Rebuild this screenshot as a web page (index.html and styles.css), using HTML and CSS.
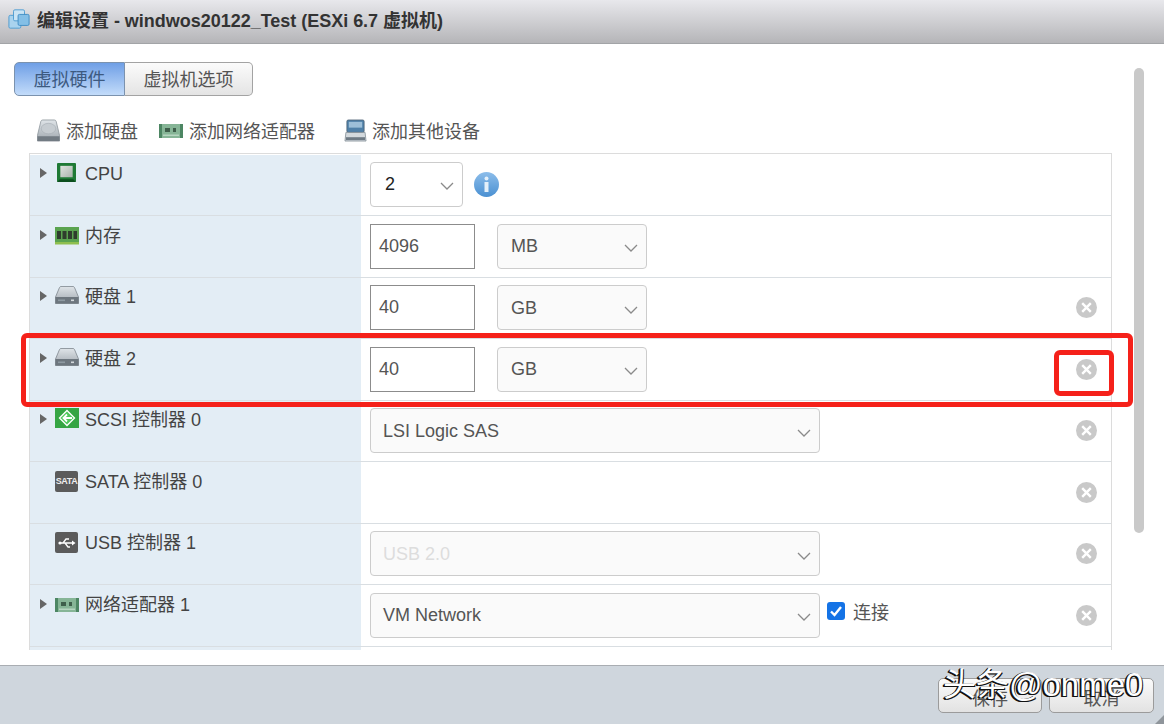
FILE: index.html
```html
<!DOCTYPE html>
<html lang="zh">
<head>
<meta charset="utf-8">
<title>编辑设置</title>
<link rel="stylesheet" href="styles.css">
</head>
<body>
<svg class="defs" width="0" height="0">
  <defs>
    <linearGradient id="disk" x1="0" y1="0" x2="0" y2="1"><stop offset="0" stop-color="#dfe4e8"/><stop offset="0.7" stop-color="#b3bac0"/><stop offset="1" stop-color="#9aa2a9"/></linearGradient>
    <linearGradient id="info" x1="0" y1="0" x2="0" y2="1"><stop offset="0" stop-color="#8cbdea"/><stop offset="1" stop-color="#4a90d2"/></linearGradient>
    <linearGradient id="cpu" x1="0" y1="0" x2="1" y2="1"><stop offset="0" stop-color="#dfe5df"/><stop offset="1" stop-color="#a9b3ab"/></linearGradient>
    <symbol id="i-disk" viewBox="0 0 24 18">
      <path d="M4.5 1.5Q5 .5 6 .5h12q1 0 1.500 1L23.500 11v6.500H.5V11z" fill="url(#disk)" stroke="#7f878e" stroke-width=".8"/>
      <rect x=".5" y="11" width="23" height="6.500" fill="#6d767e"/>
      <rect x="16" y="13.500" width="3" height="1.600" fill="#d3d8dc"/><rect x="3" y="13.500" width="7" height="1.600" fill="#8e99a1"/>
    </symbol>
    <symbol id="i-nic" viewBox="0 0 24 14">
      <rect x="0" y="0" width="24" height="14" fill="#86b596"/>
      <rect x="0" y="0" width="3" height="14" fill="#4d8663"/><rect x="21" y="0" width="3" height="14" fill="#4d8663"/>
      <rect x="6" y="4" width="5" height="4" fill="#3f5f4b"/><rect x="14" y="4" width="3" height="4" fill="#3f5f4b"/>
      <rect x="4" y="10.500" width="16" height="1.500" fill="#b6d6c0"/>
    </symbol>
  </defs>
</svg>
<div class="dialog">
  <header class="titlebar">
    <svg class="title-icon" viewBox="0 0 24 24"><rect x="1" y="8" width="13" height="14" rx="1.500" fill="#a9d3ee" stroke="#4b9ad0"/><rect x="6" y="2" width="12" height="12" rx="1.500" fill="#c9e4f5" stroke="#4b9ad0"/><rect x="11" y="7" width="12" height="12" rx="1.500" fill="#84bfe6" stroke="#3f8cc4"/></svg>
    <h1 class="title">编辑设置 - windwos20122_Test (ESXi 6.7 虚拟机)</h1>
  </header>
  <main class="body">
    <div class="content">
      <div class="tabs">
        <div class="tab tab-active">虚拟硬件</div>
        <div class="tab">虚拟机选项</div>
      </div>
      <div class="toolbar">
        <div class="tool tool-disk"><svg class="tool-icon" viewBox="0 0 24 24"><path d="M4 2.500Q4.500 1 6 1h12q1.500 0 2 1.500L23.500 17v6H.5v-6z" fill="url(#disk)" stroke="#8a9299" stroke-width=".8"/><ellipse cx="12" cy="10" rx="7.500" ry="5.500" fill="#c6ccd1" stroke="#a5acb2" stroke-width=".6"/><rect x=".5" y="18" width="23" height="5" fill="#727b83"/></svg>添加硬盘</div>
        <div class="tool tool-nic"><svg class="tool-icon-nic"><use href="#i-nic"/></svg>添加网络适配器</div>
        <div class="tool"><svg class="tool-icon" viewBox="0 0 24 24"><rect x="3" y="1" width="18" height="13" rx="1.500" fill="#4f80a8" stroke="#4a5f70" stroke-width=".8"/><rect x="5" y="3" width="14" height="6" fill="#9dbfd8"/><path d="M2 14h20l1 9H1z" fill="#d3d9dd" stroke="#7f8a93" stroke-width=".8"/><rect x="2" y="19" width="20" height="3" fill="#6e7a84"/></svg>添加其他设备</div>
      </div>
      <div class="table">
        <div class="row">
          <div class="label"><span class="arrow"></span><svg class="hw-icon hw-cpu" viewBox="0 0 20 20"><rect x="0" y="0" width="20" height="20" rx="1" fill="#1f7a35"/><rect x="3.500" y="3" width="13" height="12" fill="url(#cpu)"/><path d="M0 20l3-3h14l3 3z" fill="#0c4f1e"/></svg><span>CPU</span></div>
          <div class="cell">
            <div class="select select-cpu"><span class="value-dark">2</span><svg class="chev" viewBox="0 0 14 8"><path d="M1 1l6 6 6-6"/></svg></div>
            <svg class="info" viewBox="0 0 25 25"><circle cx="12.500" cy="12.500" r="12.500" fill="url(#info)"/><circle cx="12.500" cy="6.500" r="2" fill="#e4f0fa"/><rect x="10.500" y="10" width="4" height="10" fill="#e4f0fa"/></svg>
          </div>
        </div>
        <div class="row">
          <div class="label"><span class="arrow"></span><svg class="hw-icon hw-ram" viewBox="0 0 24 18"><rect x="0" y="0" width="24" height="15" fill="#5aa34f"/><rect x="0" y="15" width="24" height="2.500" fill="#8fbf4f"/><rect x="2" y="4" width="4" height="8" fill="#2f3d2d"/><rect x="7.500" y="4" width="4" height="8" fill="#2f3d2d"/><rect x="13" y="4" width="4" height="8" fill="#2f3d2d"/><rect x="18.500" y="4" width="3.500" height="8" fill="#2f3d2d"/></svg><span>内存</span></div>
          <div class="cell">
            <div class="input">4096</div>
            <div class="select select-unit"><span>MB</span><svg class="chev" viewBox="0 0 14 8"><path d="M1 1l6 6 6-6"/></svg></div>
          </div>
        </div>
        <div class="row">
          <div class="label"><span class="arrow"></span><svg class="hw-icon"><use href="#i-disk"/></svg><span>硬盘 1</span></div>
          <div class="cell">
            <div class="input">40</div>
            <div class="select select-unit"><span>GB</span><svg class="chev" viewBox="0 0 14 8"><path d="M1 1l6 6 6-6"/></svg></div>
            <svg class="close" viewBox="0 0 21 21"><circle cx="10.500" cy="10.500" r="10.500"/><path d="M6.200 6.200l8.600 8.600M14.800 6.200l-8.600 8.600"/></svg>
          </div>
        </div>
        <div class="row">
          <div class="label"><span class="arrow"></span><svg class="hw-icon"><use href="#i-disk"/></svg><span>硬盘 2</span></div>
          <div class="cell">
            <div class="input">40</div>
            <div class="select select-unit"><span>GB</span><svg class="chev" viewBox="0 0 14 8"><path d="M1 1l6 6 6-6"/></svg></div>
            <svg class="close" viewBox="0 0 21 21"><circle cx="10.500" cy="10.500" r="10.500"/><path d="M6.200 6.200l8.600 8.600M14.800 6.200l-8.600 8.600"/></svg>
          </div>
        </div>
        <div class="row">
          <div class="label"><span class="arrow"></span><svg class="hw-icon hw-scsi" viewBox="0 0 24 20"><rect x="0" y="0" width="24" height="20" fill="#35a544"/><path d="M12 2.500l7.500 7.500-7.500 7.500L4.500 10z" fill="#4ec85c" stroke="#fff" stroke-width="1.300"/><path d="M12 6.500L8.500 10l3.500 3.500M9 10h8" fill="none" stroke="#fff" stroke-width="1.800"/></svg><span>SCSI 控制器 0</span></div>
          <div class="cell">
            <div class="select select-wide"><span>LSI Logic SAS</span><svg class="chev" viewBox="0 0 14 8"><path d="M1 1l6 6 6-6"/></svg></div>
            <svg class="close" viewBox="0 0 21 21"><circle cx="10.500" cy="10.500" r="10.500"/><path d="M6.200 6.200l8.600 8.600M14.800 6.200l-8.600 8.600"/></svg>
          </div>
        </div>
        <div class="row">
          <div class="label label-noarrow"><span class="dev-badge"><span class="sata">SATA</span></span><span>SATA 控制器 0</span></div>
          <div class="cell">
            <svg class="close" viewBox="0 0 21 21"><circle cx="10.500" cy="10.500" r="10.500"/><path d="M6.200 6.200l8.600 8.600M14.800 6.200l-8.600 8.600"/></svg>
          </div>
        </div>
        <div class="row">
          <div class="label label-noarrow"><span class="dev-badge"><svg class="usb" viewBox="0 0 18 14"><path d="M1 7h15M5 7l3-4h3M7 7l3 4h2" fill="none" stroke="#fff" stroke-width="1.300"/><circle cx="2" cy="7" r="1.600" fill="#fff"/><path d="M14 4.500l3.500 2.500-3.500 2.500z" fill="#fff"/></svg></span><span>USB 控制器 1</span></div>
          <div class="cell">
            <div class="select select-wide select-disabled"><span>USB 2.0</span><svg class="chev" viewBox="0 0 14 8"><path d="M1 1l6 6 6-6"/></svg></div>
            <svg class="close" viewBox="0 0 21 21"><circle cx="10.500" cy="10.500" r="10.500"/><path d="M6.200 6.200l8.600 8.600M14.800 6.200l-8.600 8.600"/></svg>
          </div>
        </div>
        <div class="row">
          <div class="label"><span class="arrow"></span><svg class="hw-icon hw-nic"><use href="#i-nic"/></svg><span>网络适配器 1</span></div>
          <div class="cell">
            <div class="select select-wide"><span>VM Network</span><svg class="chev" viewBox="0 0 14 8"><path d="M1 1l6 6 6-6"/></svg></div>
            <label class="check"><svg class="check-box" viewBox="0 0 18 18"><rect width="18" height="18" rx="3" fill="#1473e6"/><path d="M4 9.500l3.500 3.500L14 5" fill="none" stroke="#fff" stroke-width="2.400"/></svg>连接</label>
            <svg class="close" viewBox="0 0 21 21"><circle cx="10.500" cy="10.500" r="10.500"/><path d="M6.200 6.200l8.600 8.600M14.800 6.200l-8.600 8.600"/></svg>
          </div>
        </div>
        <div class="row"><div class="label"></div><div class="cell"></div></div>
      </div>
    </div>
    <div class="scrollbar"><div class="thumb"></div></div>
  </main>
  <footer class="footer">
    <div class="btn btn-save">保存</div>
    <div class="btn">取消</div>
    <svg class="grip" viewBox="0 0 10 10"><path d="M10 0v10H0z" fill="#8f959b"/></svg>
  </footer>
</div>
<div class="mark mark-row"></div>
<div class="mark mark-close"></div>
<div class="watermark">头条@onme0</div>
</body>
</html>
```

FILE: styles.css
```css
* { box-sizing: border-box; }
html, body { margin: 0; height: 100%; }
body {
  position: relative;
  width: 1164px;
  height: 724px;
  overflow: hidden;
  background: #fff;
  font-family: "Liberation Sans", "Noto Sans CJK SC", sans-serif;
  font-size: 18px;
  color: #444;
}
.defs { position: absolute; }
.dialog { display: flex; flex-direction: column; height: 724px; }

.titlebar {
  flex: 0 0 44px;
  display: flex;
  align-items: center;
  padding: 0 0 5px 8px;
  gap: 7px;
  background: linear-gradient(#e8e8ec, #b5b5b8);
  border-bottom: 1px solid #a2a4a7;
}
.title-icon { width: 22px; height: 22px; }
.title { margin: 0; font-size: 18px; font-weight: 700; color: #333; white-space: nowrap; letter-spacing: -0.02px; }

.body { flex: 1; display: flex; min-height: 0; }
.content { width: 1134px; padding: 18px 0 0 14px; }

.tabs { display: flex; width: 239px; height: 34px; }
.tab {
  display: flex; align-items: center; justify-content: center;
  width: 128px; padding: 0 0 3px; color: #555;
  background: linear-gradient(#fbfbfb, #e4e4e4);
  border: 1px solid #a3a3a3; border-left: 0;
  border-radius: 0 5px 5px 0;
}
.tab-active {
  width: 111px; color: #3d5a80;
  background: linear-gradient(#6f9fe6, #c3dcfa);
  border: 1px solid #7b92ae; border-radius: 5px 0 0 5px;
}

.toolbar { display: flex; align-items: center; height: 24px; margin: 24px 0 0 23px; color: #555; }
.tool { display: flex; align-items: center; white-space: nowrap; padding-bottom: 5px; }
.tool-disk { gap: 6px; margin-right: 21px; }
.tool-nic { gap: 6px; margin-right: 29px; }
.tool:last-child { gap: 5px; }
.tool-icon { width: 23px; height: 23px; margin-top: 2px; }
.tool-icon-nic { width: 24px; height: 14px; margin-top: 2px; }

.table {
  width: 1083px; height: 497px; margin: 9px 0 0 15px;
  padding-top: .5px;
  overflow: hidden;
  border: 1px solid #dcdcdc; border-bottom: 0;
}
.row {
  display: grid; grid-template-columns: 331px 1fr;
  height: 61.5px;
  border-bottom: 1px solid #d9dee2;
}
.label {
  display: flex; align-items: flex-start;
  padding: 7.5px 0 0 10px;
  background: #e3edf5; color: #444; line-height: 24px;
}
.label-noarrow { padding-left: 25px; }
.arrow {
  flex: none; width: 0; height: 0; margin: 6px 8px 0 0;
  border-left: 7px solid #666;
  border-top: 5.5px solid transparent; border-bottom: 5.5px solid transparent;
}
.hw-icon { flex: none; width: 24px; height: 18px; margin: 1px 6px 0 0; }
.hw-cpu { width: 19px; height: 19px; margin: 1px 9px 0 2px; }
.hw-ram { height: 18px; margin-top: 3px; }
.hw-scsi { width: 24px; height: 20px; margin-top: 0; }
.hw-nic { height: 14px; margin-top: 5px; }
.dev-badge {
  flex: none; display: flex; align-items: center; justify-content: center;
  width: 23px; height: 21px; margin: 1px 7px 0 0;
  border-radius: 2px; background: #5b5b5b;
}
.sata { font-size: 9px; line-height: 1; font-weight: 700; color: #eee; letter-spacing: -.4px; }
.usb { width: 18px; height: 14px; }

.cell { display: flex; align-items: flex-start; padding: 7.5px 14px 0 9px; }
.select {
  display: flex; align-items: center; justify-content: space-between;
  height: 45px; padding: 1px 8px 0 12px;
  background: #fafafa; border: 1px solid #ccc; border-radius: 4px;
  color: #555;
}
.select-cpu { width: 93px; background: #fff; padding-left: 14px; padding-bottom: 1px; }
.select-unit { width: 150px; margin-left: 22px; padding-left: 13px; }
.select-wide { width: 450px; }
.select-disabled { color: #ddd; }
.value-dark { color: #222; }
.chev { width: 14px; height: 8px; fill: none; stroke: #8a8a8a; stroke-width: 1.3; margin-top: 3px; }
.input {
  display: flex; align-items: center;
  width: 105px; height: 45px; padding: 0 8px;
  background: #fff; border: 1px solid #8c8c8c; color: #555;
}
.info { width: 25px; height: 25px; margin: 10px 0 0 11px; }
.close { flex: none; width: 21px; height: 21px; margin: 12px 0 0 auto; }
.close circle { fill: #c9c9c9; }
.close path { fill: none; stroke: #fff; stroke-width: 2.4; }
.check { display: flex; align-items: center; gap: 8px; margin: 6px 0 0 7px; height: 24px; color: #555; }
.check-box { width: 18px; height: 18px; }

.scrollbar { flex: 1; padding: 24px 20px 0 0; }
.thumb { width: 10px; height: 465px; background: #c9c9c9; border-radius: 5px; }

.footer {
  flex: 0 0 59px;
  position: relative;
  display: flex; justify-content: flex-end; gap: 7px;
  padding: 12px 10px 0 0;
  background: #cfd6dd;
  border-top: 1px solid #a9adb2;
}
.btn {
  display: flex; align-items: center; justify-content: center;
  width: 105px; height: 35px; padding-top: 2px; color: #555;
  background: linear-gradient(#fbfbfb, #e2e2e2);
  border: 1px solid #9b9b9b; border-radius: 5px;
}
.btn-save { width: 104px; }
.grip { position: absolute; right: 0; bottom: 0; width: 9px; height: 9px; }

.mark { position: absolute; border: 5px solid #f5211a; border-radius: 6px; pointer-events: none; }
.mark-row { left: 21px; top: 333px; width: 1112px; height: 74px; }
.mark-close { left: 1054px; top: 350px; width: 60px; height: 46px; }

.watermark {
  position: absolute; left: 943px; top: 665px;
  font-size: 33px; line-height: 40px; color: #fff; white-space: nowrap;
  text-shadow: -1px 1px 0 #111, -2px 1px 0 #111, 1px 1px 0 #111, -1px 0 0 #111;
}
```
